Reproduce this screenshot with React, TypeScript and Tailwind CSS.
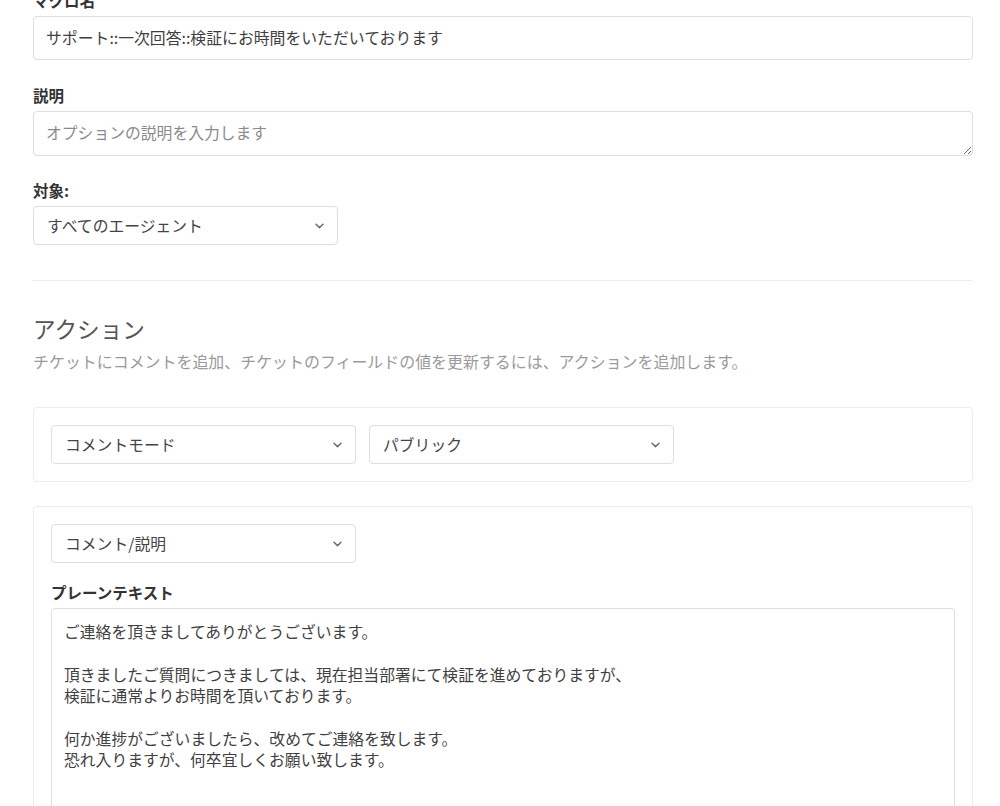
import React from "react";

const font = { fontFamily: '"Noto Sans CJK JP", "Noto Sans", sans-serif' };

function Chevron() {
  return (
    <svg width="9" height="6" viewBox="0 0 9 6" className="shrink-0">
      <path d="M1 1.2 L4.5 4.6 L8 1.2" fill="none" stroke="#6f6f6f" strokeWidth="1.5" strokeLinecap="round" strokeLinejoin="round" />
    </svg>
  );
}

function Select({ label }: { label: string }) {
  return (
    <div className="flex h-[39px] w-[305px] items-center justify-between rounded-[4px] border border-[#dedede] bg-white pl-[13px] pr-[13px]">
      <span className="text-[15.8px] leading-none text-[#444]">{label}</span>
      <Chevron />
    </div>
  );
}

function Label({ children }: { children: React.ReactNode }) {
  return <div className="mb-[5px] h-[22px] text-[15.5px] font-bold leading-[22px] text-[#333]">{children}</div>;
}

const body = `ご連絡を頂きましてありがとうございます。

頂きましたご質問につきましては、現在担当部署にて検証を進めておりますが、
検証に通常よりお時間を頂いております。

何か進捗がございましたら、改めてご連絡を致します。
恐れ入りますが、何卒宜しくお願い致します。`;

export default function App() {
  return (
    <div className="min-h-[806px] overflow-hidden bg-white" style={font}>
      <div className="ml-[33px] w-[940px]">
        <div className="-mt-[11px]">
          <Label>マクロ名*</Label>
        </div>
        <div className="flex h-[44px] items-center rounded-[4px] border border-[#dedede] px-[12px]">
          <span className="text-[15.85px] text-[#3f3f3f]">サポート::一次回答::検証にお時間をいただいております</span>
        </div>

        <div className="mt-[24px]">
          <Label>説明</Label>
        </div>
        <textarea
          readOnly
          placeholder="オプションの説明を入力します"
          className="block h-[45px] w-full resize-y rounded-[4px] border border-[#dedede] px-[12px] py-[10px] text-[15.8px] leading-[22px] text-[#444] placeholder:text-[#8a8a8a] outline-none"
          style={font}
        />

        <div className="mt-[23px]">
          <Label>対象:</Label>
        </div>
        <Select label="すべてのエージェント" />

        <div className="mt-[35px] h-px bg-[#ececec]" />

        <div className="mt-[33px] h-[30px] text-[22.6px] leading-[30px] text-[#555]">アクション</div>
        <div className="mt-[6px] h-[22px] text-[15.95px] leading-[22px] text-[#9a9a9a]">
          チケットにコメントを追加、チケットのフィールドの値を更新するには、アクションを追加します。
        </div>

        <div className="mt-[35px] flex gap-[13px] rounded-[4px] border border-[#ececec] px-[17px] py-[17px]">
          <Select label="コメントモード" />
          <Select label="パブリック" />
        </div>

        <div className="mt-[24px] rounded-[4px] border border-[#ececec] px-[17px] pt-[17px] pb-[20px]">
          <Select label="コメント/説明" />
          <div className="mt-[18px]">
            <Label>プレーンテキスト</Label>
          </div>
          <textarea
            readOnly
            defaultValue={body}
            className="block h-[240px] w-full resize-y rounded-[4px] border border-[#dedede] px-[12px] pt-[12px] text-[15.8px] leading-[21.4px] text-[#3f3f3f] outline-none"
            style={font}
          />
        </div>
      </div>
    </div>
  );
}
